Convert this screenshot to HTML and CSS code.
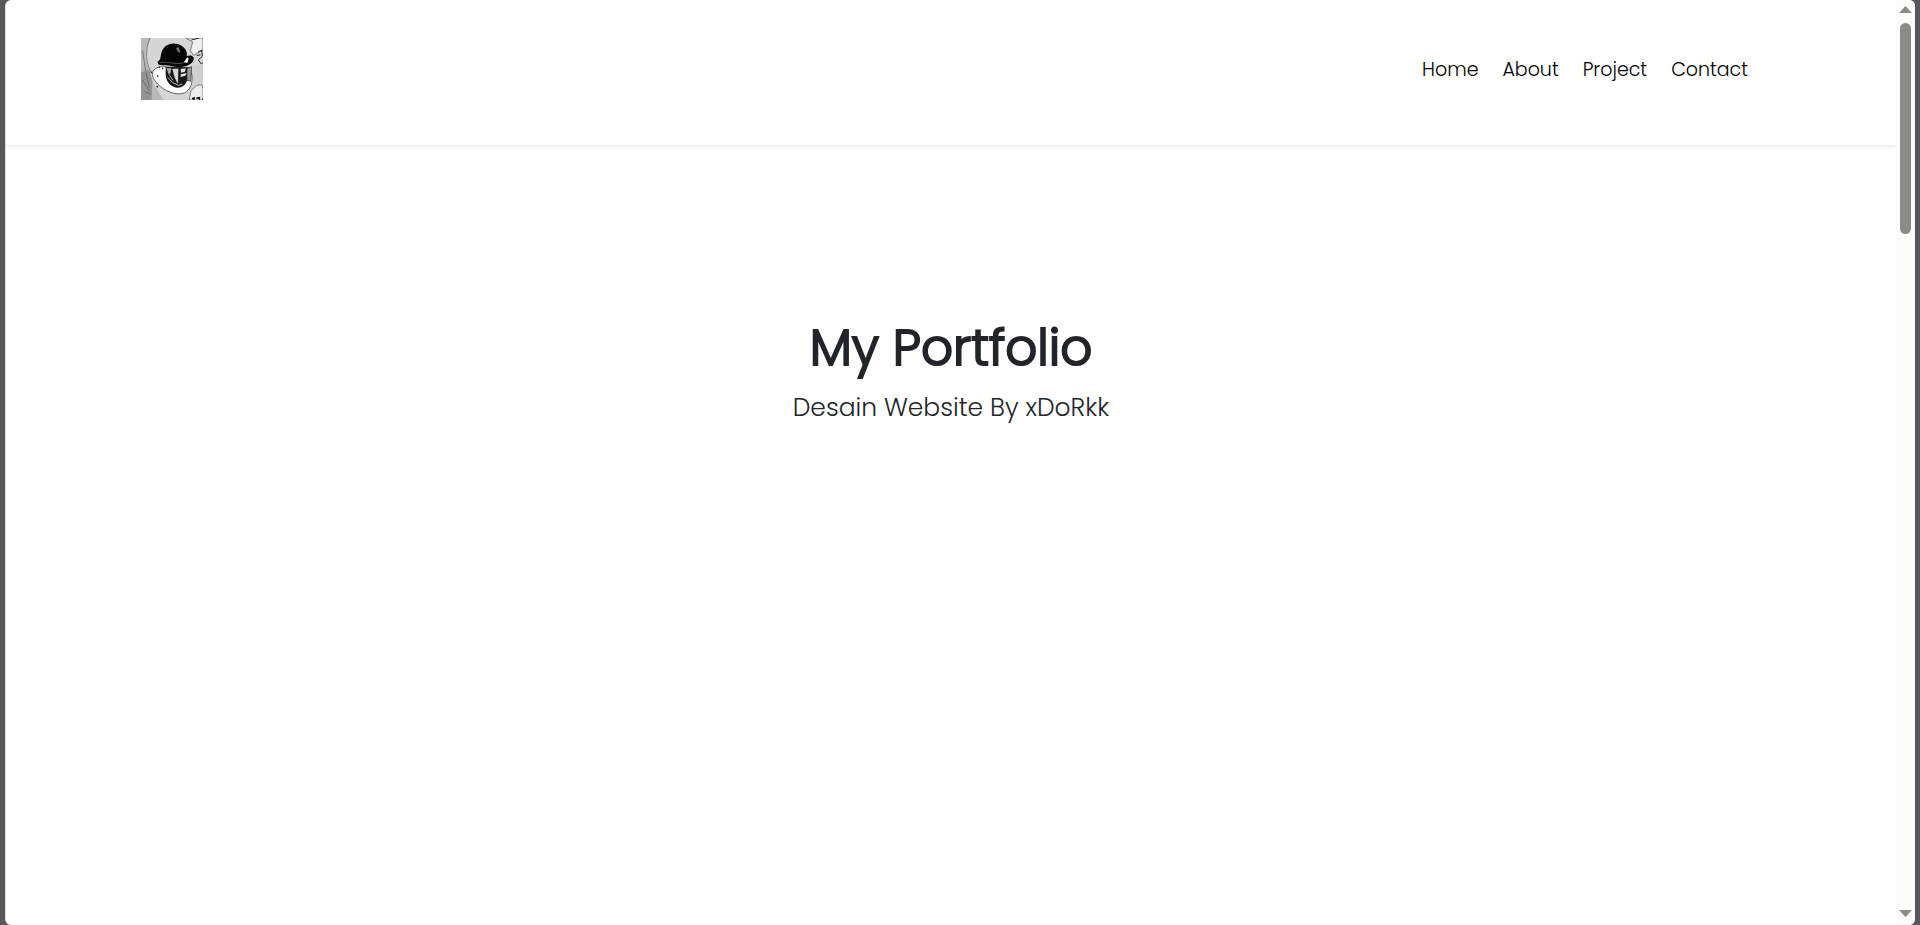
FILE: index.html
```html
<!DOCTYPE html>
<html lang="id">
<head>
<meta charset="utf-8">
<title>My Portfolio</title>
<link rel="stylesheet" href="styles.css">
</head>
<body>
<div class="window">
  <div class="page">
    <header class="header">
      <a class="logo" href="#home" aria-label="Home">
        <svg viewBox="0 0 186 186" role="img" aria-hidden="true">
          <rect width="186" height="186" fill="#d6d6d6"/>
          <path d="M0 0H28L17 30 15 65 27 105 39 140 68 186H0Z" fill="#b9b9b9"/>
          <path d="M0 103 24 95 34 128 32 186H0Z" fill="#959595"/>
          <path d="M27 0C12 35 13 78 34 108M5 38 14 100M3 125 27 160M10 160 30 170M15 104 25 148" fill="none" stroke="#555" stroke-width="2"/>
          <path d="M135 0 155 12 148 38 158 52 186 36V0Z" fill="#eee" stroke="#444" stroke-width="2"/>
          <path d="M151 6 175 0M171 42 182 36 184 55 172 66 181 78 186 74M167 52 178 51M186 92 177 103 186 114" fill="none" stroke="#222" stroke-width="3"/>
          <path d="M157 85 186 82V186H135L155 151Z" fill="#d0d0d0"/>
          <path d="M150 158 168 142 182 140 186 154V186H145Z" fill="#ededed" stroke="#555" stroke-width="2"/>
          <path d="M36 100C42 88 60 84 76 87L77 103C86 97 145 90 152 105 157 135 148 156 130 165 103 174 70 158 51 139 38 126 31 112 36 100Z" fill="#fff" stroke="#222" stroke-width="2"/>
          <path d="M74 86 151 88 141 118C137 139 126 150 108 149 88 147 75 130 74 111Z" fill="#181818"/>
          <path d="M76 90 91 91 89 104 84 112Z" fill="#aaa"/>
          <path d="M94 92 112 92 111 138 101 119Z" fill="#d8d8d8"/>
          <path d="M119 93 134 91 132 101 120 104ZM119 109 137 105 133 113 119 117Z" fill="#e2e2e2"/>
          <path d="M138 91 152 86 149 130 138 127Z" fill="#9a9a9a" stroke="#222" stroke-width="2"/>
          <path d="M80 118 94 133 112 142 124 138M86 112 96 127" fill="none" stroke="#bbb" stroke-width="3"/>
          <path d="M49 71C61 67 57 56 62 42 70 16 101 11 122 23 138 34 139 47 137 54 151 49 160 55 158 65 153 81 125 92 93 85 77 81 60 84 52 79Z" fill="#050505"/>
          <path d="M57 74C80 68 111 84 134 72" fill="none" stroke="#777" stroke-width="2"/>
          <path d="M129 72 139 58 143 62 139 75Z" fill="#fff"/>
          <path d="M105 30 113 28 118 44 111 42Z" fill="#777"/>
          <path d="M53 87 57 89M29 101 33 104M48 115 52 113M47 144 51 148M63 91 67 92" stroke="#222" stroke-width="4"/>
          <path d="M153 182 159 180 158 186M166 180 175 179 175 186M184 183H186" fill="none" stroke="#111" stroke-width="5"/>
        </svg>
      </a>
      <nav class="nav">
        <a href="#home">Home</a>
        <a href="#about">About</a>
        <a href="#project">Project</a>
        <a href="#contact">Contact</a>
      </nav>
    </header>
    <main class="hero" id="home">
      <h1>My Portfolio</h1>
      <p>Desain Website By xDoRkk</p>
    </main>
  </div>
  <div class="scrollbar" aria-hidden="true">
    <svg class="arrow" viewBox="0 0 13 7"><path d="M0 7 6.500 0 13 7Z"/></svg>
    <div class="track"><div class="thumb"></div></div>
    <svg class="arrow" viewBox="0 0 13 7"><path d="M0 0H13L6.500 7Z"/></svg>
  </div>
</div>
</body>
</html>
```
FILE: styles.css
```css
* {
  box-sizing: border-box;
}

body {
  margin: 0;
  padding: 0 5px;
  background: #56565c;
  color: #212529;
  font-family: Poppins, Inter, "Open Sans", sans-serif;
}

.window {
  display: flex;
  min-height: 100vh;
  overflow: hidden;
  border-left: 1px solid #ddd;
  border-radius: 6px;
  background: #fff;
}

.page {
  flex: 1;
  display: flex;
  flex-direction: column;
}

.header {
  display: flex;
  justify-content: space-between;
  align-items: flex-start;
  padding: 38px 148px 45px 135px;
  box-shadow: 0 2px 4px rgba(0, 0, 0, 0.08);
}

.logo svg {
  display: block;
  width: 62px;
  height: 62px;
}

.nav {
  display: flex;
  gap: 24px;
  padding-top: 18px;
}

.nav a {
  color: #000;
  font-size: 19px;
  font-weight: 300;
  line-height: 28px;
  text-decoration: none;
}

.hero {
  padding-top: 171px;
  text-align: center;
}

.hero h1 {
  margin: 0;
  font-size: 50px;
  font-weight: 300;
  line-height: 64px;
  -webkit-text-stroke: 2px currentColor;
}

.hero p {
  margin: 8px 0 0;
  font-size: 25px;
  font-weight: 300;
  line-height: 40px;
}

.scrollbar {
  display: flex;
  flex-direction: column;
  align-items: center;
  width: 19px;
  padding: 6px 0 8px;
  background: #fcfcfc;
}

.arrow {
  width: 13px;
  height: 7px;
  fill: #8b8b8b;
}

.track {
  flex: 1;
  width: 11px;
  padding: 10px 0;
}

.thumb {
  height: 24%;
  min-height: 211px;
  border-radius: 6px;
  background: #8b8b8b;
}
```
